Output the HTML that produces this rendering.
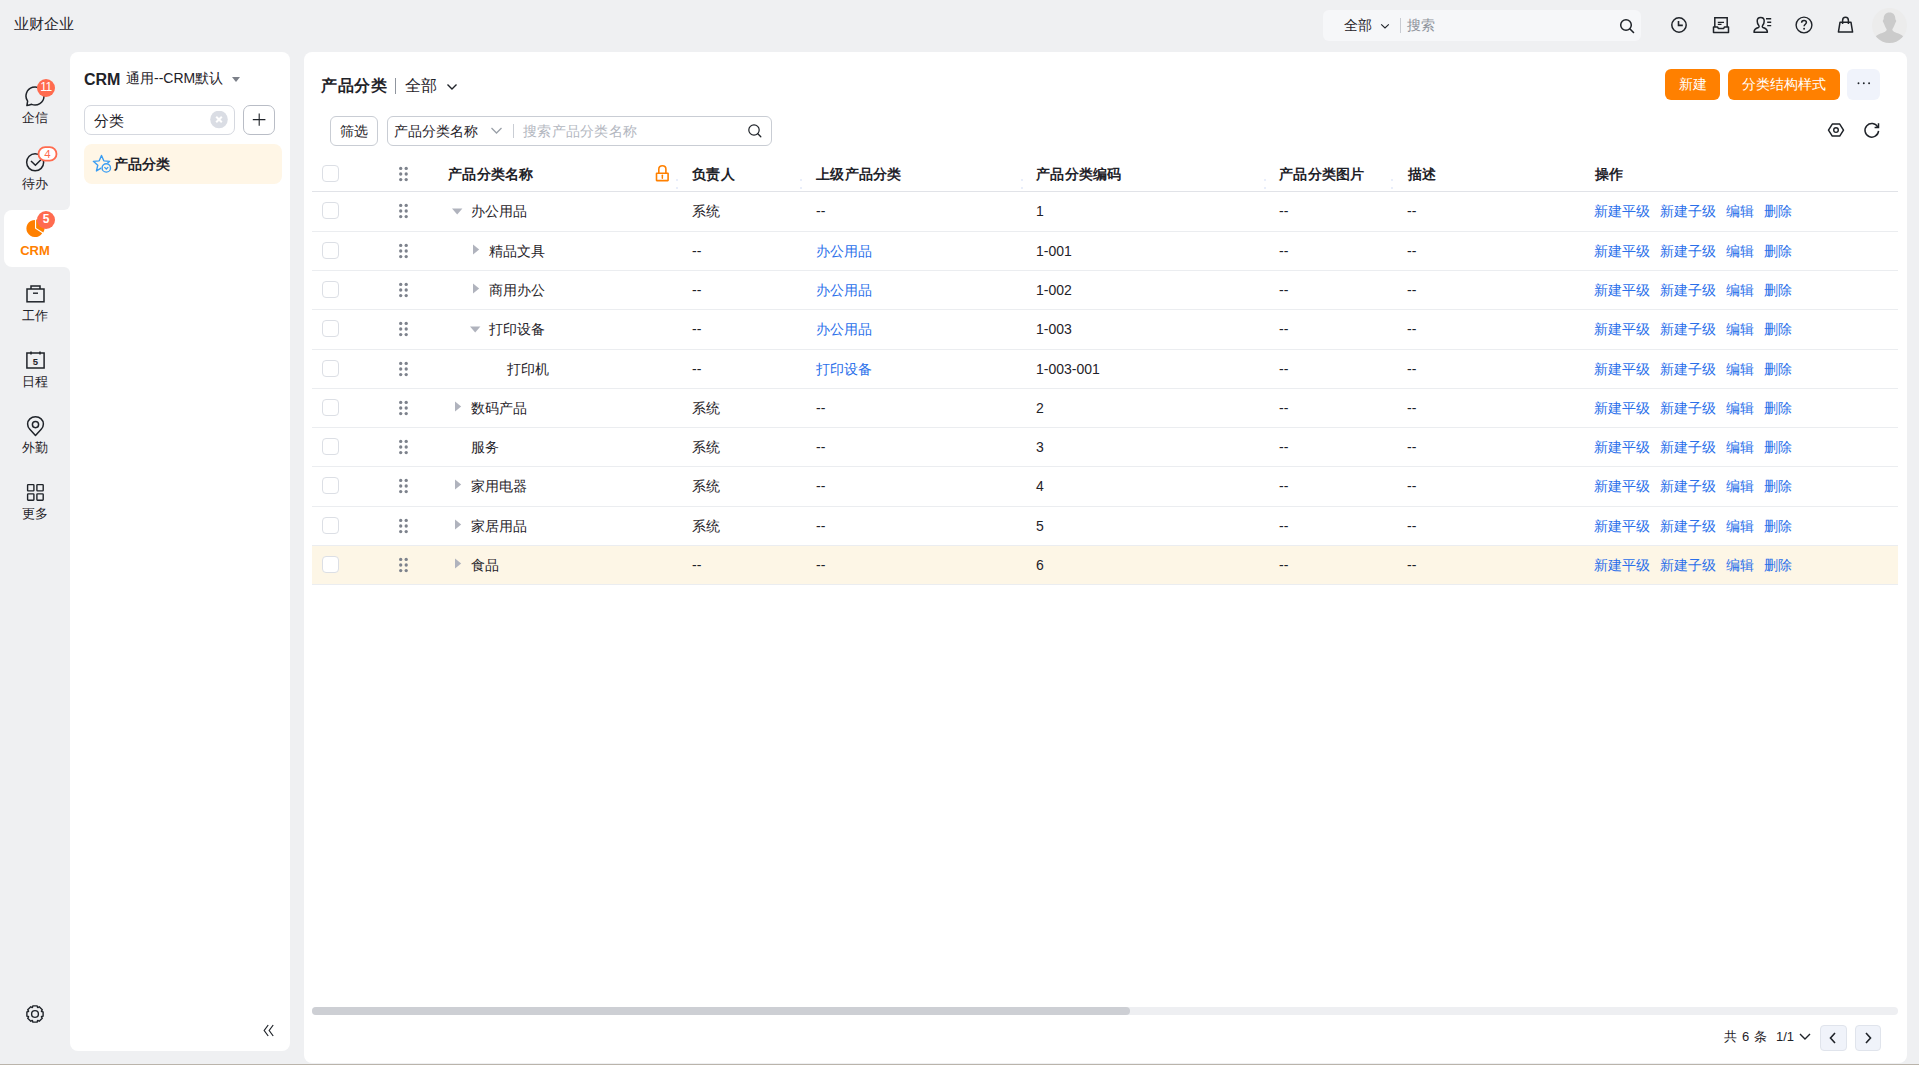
<!DOCTYPE html>
<html><head><meta charset="utf-8">
<style>
*{box-sizing:border-box;margin:0;padding:0}
html,body{width:1919px;height:1065px;overflow:hidden}
body{background:#eff0f2;font-family:"Liberation Sans",sans-serif;color:#1f2329;position:relative;font-size:14px}
.abs{position:absolute}
svg{display:block}
/* top bar */
#brand{left:14px;top:14px;font-size:15px;line-height:20px;color:#1f2329}
#gsearch{left:1323px;top:10px;width:318px;height:31px;background:#f6f7f9;border-radius:6px}
#gsearch .all{left:21px;top:6px;font-size:14px;line-height:19px}
#gsearch .sep{left:77px;top:8px;width:1px;height:15px;background:#c9ccd3}
#gsearch .ph{left:84px;top:6px;font-size:14px;line-height:19px;color:#8f949c}
.ticon{top:14px}
/* left nav */
.nav{left:0;width:70px;height:56px;text-align:center}
.nav .lbl{position:absolute;left:0;width:70px;font-size:13px;line-height:16px;color:#1f2329}
.badge{position:absolute;height:16px;min-width:16px;border-radius:8px;background:#f5694c;color:#fff;font-size:11px;line-height:16px;text-align:center;padding:0 3px}
/* panels */
#p2{left:70px;top:52px;width:220px;height:999px;background:#fff;border-radius:8px}
#p3{left:304px;top:52px;width:1603px;height:1011px;background:#fff;border-radius:8px}
.btn-o{position:absolute;background:#ff8000;color:#fff;border-radius:6px;font-size:14px;text-align:center;line-height:31px;height:31px}
/* table */
.row{position:absolute;left:312px;width:1586px;height:40px;border-bottom:1px solid #eeeff2}
.cell{position:absolute;top:0;line-height:39px;font-size:14px;white-space:nowrap}
.hd .cell{font-weight:bold}
.cb{position:absolute;left:10px;top:11px;width:18px;height:18px;border:1px solid #dcdee3;border-radius:4px;background:#fff}
.drag{position:absolute;left:86px;top:12px}
.lnk{color:#2b6fe0}
.tri-r{position:absolute;width:0;height:0;border-top:5px solid transparent;border-bottom:5px solid transparent;border-left:6px solid #a6a9b0}
.tri-d{position:absolute;width:0;height:0;border-left:5px solid transparent;border-right:5px solid transparent;border-top:6px solid #a6a9b0}
.ops span{margin-right:9px}
</style></head><body>

<!-- TOP BAR -->
<div id="gsearch" class="abs">
  <div class="abs all">全部</div>
  <svg class="abs" style="left:57px;top:12px" width="10" height="8" viewBox="0 0 10 8"><path d="M1.2 2.3 L5 6 L8.8 2.3" fill="none" stroke="#1f2329" stroke-width="1.1"/></svg>
  <div class="abs sep"></div>
  <div class="abs ph">搜索</div>
  <svg class="abs" style="left:296px;top:8px" width="16" height="16" viewBox="0 0 16 16"><circle cx="7" cy="7" r="5.3" fill="none" stroke="#1f2329" stroke-width="1.5"/><path d="M11 11 L14.5 14.5" stroke="#1f2329" stroke-width="1.6" stroke-linecap="round"/></svg>
</div>


<!-- top icons -->
<svg class="abs" style="left:1670px;top:16px" width="18" height="18" viewBox="0 0 18 18"><circle cx="9" cy="9" r="7.2" fill="none" stroke="#1f2329" stroke-width="1.5"/><path d="M8.5 5 V9.4 H12.8" fill="none" stroke="#1f2329" stroke-width="1.6"/></svg>
<svg class="abs" style="left:1712px;top:16px" width="18" height="18" viewBox="0 0 18 18"><path d="M2.8 11 V1.8 H15.2 V11" fill="none" stroke="#1f2329" stroke-width="1.5"/><path d="M5.8 6.3 H12 M5.8 8.4 H9.5" stroke="#1f2329" stroke-width="1.2"/><path d="M1.5 11 H5.5 L6.5 12.6 H11.5 L12.5 11 H16.5 V16.5 H1.5 Z" fill="none" stroke="#1f2329" stroke-width="1.5" stroke-linejoin="round"/></svg>
<svg class="abs" style="left:1753px;top:16px" width="20" height="18" viewBox="0 0 20 18"><path d="M1 16.3 C1 13.5 2.5 12.3 5.5 11.5 C6.2 11.2 6.3 10.3 5.8 9.6 C4.7 8.3 4.2 6.8 4.2 5 C4.2 2.9 5.6 1.5 7.7 1.5 C9.8 1.5 11.2 2.9 11.2 5 C11.2 6.8 10.7 8.3 9.6 9.6 C9.1 10.3 9.2 11.2 9.9 11.5 C12.9 12.3 14.4 13.5 14.4 16.3 Z" fill="none" stroke="#1f2329" stroke-width="1.5" stroke-linejoin="round"/><path d="M13 2.7 H18.2 M14.2 6.3 H18.2 M14.2 9.6 H18.2" stroke="#1f2329" stroke-width="1.4"/></svg>
<svg class="abs" style="left:1795px;top:16px" width="18" height="18" viewBox="0 0 18 18"><circle cx="9" cy="9" r="7.9" fill="none" stroke="#1f2329" stroke-width="1.4"/><path d="M6.6 6.8 C6.6 5.3 7.7 4.5 9 4.5 C10.4 4.5 11.4 5.4 11.4 6.6 C11.4 8.2 9.1 8.4 9.1 10.3" fill="none" stroke="#1f2329" stroke-width="1.5"/><circle cx="9.1" cy="12.7" r="0.95" fill="#1f2329"/></svg>
<svg class="abs" style="left:1837px;top:16px" width="17" height="18" viewBox="0 0 17 18"><path d="M3 6.3 H14 L15.6 16.1 H1.4 Z" fill="none" stroke="#1f2329" stroke-width="1.5" stroke-linejoin="round"/><path d="M5.6 8 V4.4 C5.6 2.5 6.8 1.3 8.5 1.3 C10.2 1.3 11.4 2.5 11.4 4.4 V8" fill="none" stroke="#1f2329" stroke-width="1.5"/></svg>
<svg class="abs" style="left:1872px;top:8px" width="35" height="35" viewBox="0 0 35 35"><defs><clipPath id="av"><circle cx="17.5" cy="17.5" r="17.5"/></clipPath></defs><circle cx="17.5" cy="17.5" r="17.5" fill="#ececec"/><g clip-path="url(#av)" fill="#cbcbcb"><path d="M17.5 4.5 C21.5 4.5 23.5 7.5 23.3 11 L24.3 13 L23.1 15.5 C22.3 18 21 20 20.3 21.5 C20.5 22.8 21.5 23.6 23 24.2 C28 26 32 27.5 32.5 31 L32.5 36 L2.5 36 L2.5 31 C3 27.5 7 26 12 24.2 C13.5 23.6 14.5 22.8 14.7 21.5 C14 20 12.7 18 11.9 15.5 L10.7 13 L11.7 11 C11.5 7.5 13.5 4.5 17.5 4.5 Z"/></g></svg>

<!-- LEFT NAV -->
<div class="abs" style="left:62px;top:200px;width:10px;height:77px;background:#fff"></div>
<div class="abs" style="left:0;top:0;width:70px;height:210px;background:#eff0f2;border-bottom-right-radius:6px"></div>
<div class="abs" style="left:0;top:267px;width:70px;height:798px;background:#eff0f2;border-top-right-radius:6px"></div>
<div class="abs" style="left:4px;top:210px;width:70px;height:57px;background:#fff;border-radius:8px 0 0 8px"></div>
<div id="brand2" class="abs" style="left:14px;top:14px;font-size:15px;line-height:20px;color:#1f2329">业财企业</div>

<!-- 企信 -->
<svg class="abs" style="left:24px;top:86px" width="23" height="21" viewBox="0 0 23 21"><path d="M2.9 19.6 L3.63 15.16 A9 9 0 1 1 7.63 18.34 Q5.5 19 2.9 19.6 Z" fill="none" stroke="#1f2329" stroke-width="1.5" stroke-linejoin="round"/></svg>
<div class="badge" style="left:37px;top:79px;width:18px;height:18px;line-height:18px;border-radius:9px;font-size:12px;padding:0;line-height:16px;letter-spacing:-0.5px;background:#ff6b4f">11</div>
<div class="abs" style="left:0;top:109px;width:70px;text-align:center;font-size:13px;line-height:17px">企信</div>
<!-- 待办 -->
<svg class="abs" style="left:25px;top:152px" width="20" height="21" viewBox="0 0 20 21"><circle cx="10.15" cy="10.35" r="8.5" fill="none" stroke="#1f2329" stroke-width="1.5"/><path d="M6 9 L10.4 13.2 L15.9 7.8" fill="none" stroke="#1f2329" stroke-width="1.5"/></svg>
<svg class="abs" style="left:37px;top:145px" width="21" height="17" viewBox="0 0 21 17"><rect x="1.5" y="2.2" width="18" height="13.4" rx="6.7" fill="#fff" stroke="#ff6b4f" stroke-width="1.8"/><text x="10.5" y="12.7" text-anchor="middle" font-family="Liberation Sans" font-size="11.5" fill="#ff6b4f">4</text></svg>
<div class="abs" style="left:0;top:175px;width:70px;text-align:center;font-size:13px;line-height:17px">待办</div>
<!-- CRM -->
<svg class="abs" style="left:26px;top:219px" width="20" height="20" viewBox="0 0 20 20"><path d="M9 9.5 L9 0.9 A8.6 8.6 0 1 0 16.21 14.18 Z" fill="#ff8000"/><path d="M10.1 8.9 L10.1 0.4 A8.6 8.6 0 0 1 17.3 13.5 Z" fill="#ff8000"/></svg>
<div class="badge" style="left:37px;top:211px;width:18px;height:18px;line-height:16px;border-radius:9px;font-size:12px;padding:0;background:#ff6b4f;border:0;font-weight:bold">5</div>
<div class="abs" style="left:0;top:242px;width:70px;text-align:center;font-size:13px;line-height:17px;font-weight:bold;color:#ff8000">CRM</div>
<!-- 工作 -->
<svg class="abs" style="left:26px;top:285px" width="19" height="18" viewBox="0 0 19 18"><rect x="1" y="4" width="17" height="12.8" fill="none" stroke="#1f2329" stroke-width="1.5"/><path d="M5 4 V1 H14 V4" fill="none" stroke="#1f2329" stroke-width="1.5"/><path d="M7 8.2 H12" stroke="#1f2329" stroke-width="1.4"/></svg>
<div class="abs" style="left:0;top:307px;width:70px;text-align:center;font-size:13px;line-height:17px">工作</div>
<!-- 日程 -->
<svg class="abs" style="left:26px;top:351px" width="19" height="18" viewBox="0 0 19 18"><rect x="0.9" y="2" width="17.2" height="15" fill="none" stroke="#1f2329" stroke-width="1.5"/><path d="M5 0.5 V3.5 M14 0.5 V3.5" stroke="#1f2329" stroke-width="1.5"/><text x="9.5" y="13.6" text-anchor="middle" font-family="Liberation Sans" font-weight="bold" font-size="9.5" fill="#1f2329">5</text></svg>
<div class="abs" style="left:0;top:373px;width:70px;text-align:center;font-size:13px;line-height:17px">日程</div>
<!-- 外勤 -->
<svg class="abs" style="left:26px;top:416px" width="19" height="21" viewBox="0 0 19 21"><path d="M9.5 19.5 L3.8 13.3 C2.4 11.8 1.6 9.9 1.6 8 C1.6 3.8 5.1 0.8 9.5 0.8 C13.9 0.8 17.4 3.8 17.4 8 C17.4 9.9 16.6 11.8 15.2 13.3 Z" fill="none" stroke="#1f2329" stroke-width="1.5" stroke-linejoin="round"/><circle cx="9.5" cy="8.6" r="3.1" fill="none" stroke="#1f2329" stroke-width="1.5"/></svg>
<div class="abs" style="left:0;top:439px;width:70px;text-align:center;font-size:13px;line-height:17px">外勤</div>
<!-- 更多 -->
<svg class="abs" style="left:26px;top:483px" width="19" height="19" viewBox="0 0 19 19"><rect x="1.6" y="1.6" width="6.3" height="6.3" rx="0.6" fill="none" stroke="#1f2329" stroke-width="1.4"/><rect x="10.9" y="1.6" width="6.3" height="6.3" rx="0.6" fill="none" stroke="#1f2329" stroke-width="1.4"/><rect x="1.6" y="10.9" width="6.3" height="6.3" rx="0.6" fill="none" stroke="#1f2329" stroke-width="1.4"/><rect x="10.9" y="10.9" width="6.3" height="6.3" rx="0.6" fill="none" stroke="#1f2329" stroke-width="1.4"/></svg>
<div class="abs" style="left:0;top:505px;width:70px;text-align:center;font-size:13px;line-height:17px">更多</div>
<!-- settings -->
<svg class="abs" style="left:25px;top:1004px" width="20" height="20" viewBox="0 0 20 20"><path d="M7.49 3.46 L7.83 1.89 L12.17 1.89 L12.51 3.46 L12.85 3.61 L14.20 2.73 L17.27 5.80 L16.39 7.15 L16.54 7.49 L18.11 7.83 L18.11 12.17 L16.54 12.51 L16.39 12.85 L17.27 14.20 L14.20 17.27 L12.85 16.39 L12.51 16.54 L12.17 18.11 L7.83 18.11 L7.49 16.54 L7.15 16.39 L5.80 17.27 L2.73 14.20 L3.61 12.85 L3.46 12.51 L1.89 12.17 L1.89 7.83 L3.46 7.49 L3.61 7.15 L2.73 5.80 L5.80 2.73 L7.15 3.61 Z" fill="none" stroke="#1f2329" stroke-width="1.4" stroke-linejoin="round"/><circle cx="10" cy="10" r="3.4" fill="none" stroke="#1f2329" stroke-width="1.4"/></svg>

<!-- PANEL 2 -->
<div id="p2" class="abs"></div>
<div class="abs" style="left:84px;top:70px;font-size:16px;line-height:20px;font-weight:bold">CRM</div>
<div class="abs" style="left:126px;top:68px;font-size:14px;line-height:20px">通用--CRM默认</div>
<div class="abs" style="left:232px;top:77px;width:0;height:0;border-left:4px solid transparent;border-right:4px solid transparent;border-top:5px solid #7c8089"></div>
<div class="abs" style="left:84px;top:105px;width:151px;height:30px;border:1px solid #d5d8df;border-radius:7px"></div>
<div class="abs" style="left:93.5px;top:111px;font-size:15px;line-height:20px">分类</div>
<svg class="abs" style="left:210px;top:111px" width="18" height="18" viewBox="0 0 18 18"><circle cx="9" cy="8.5" r="8.8" fill="#dadde4"/><path d="M6.2 5.7 L11.8 11.3 M11.8 5.7 L6.2 11.3" stroke="#fff" stroke-width="2"/></svg>
<div class="abs" style="left:243px;top:105px;width:32px;height:30px;border:1px solid #b9bdc6;border-radius:7px"></div>
<svg class="abs" style="left:252px;top:113px" width="14" height="14" viewBox="0 0 14 14"><path d="M7.2 0.4 V12.8 M0.8 6.6 H13.4" stroke="#1f2329" stroke-width="1.1"/></svg>
<div class="abs" style="left:84px;top:144px;width:198px;height:40px;background:#fff6e6;border-radius:8px"></div>
<svg class="abs" style="left:92px;top:154px" width="20" height="19" viewBox="0 0 20 19"><path d="M9.50 1.40 L11.79 6.84 L17.68 7.34 L13.21 11.21 L14.55 16.96 L9.50 13.90 L4.45 16.96 L5.79 11.21 L1.32 7.34 L7.21 6.84 Z" fill="none" stroke="#3a9df2" stroke-width="1.4" stroke-linejoin="round"/><circle cx="14.3" cy="13.9" r="5.2" fill="#fff6e6"/><circle cx="14.3" cy="13.9" r="4.2" fill="none" stroke="#3a9df2" stroke-width="1.4"/><path d="M12.4 13.1 L14.3 15 L16.2 13.1" fill="none" stroke="#3a9df2" stroke-width="1.3"/></svg>
<div class="abs" style="left:114px;top:154px;font-size:14px;line-height:20px;font-weight:bold">产品分类</div>
<svg class="abs" style="left:263px;top:1024px" width="12" height="13" viewBox="0 0 12 13"><path d="M5.2 1 L1.2 6.5 L5.2 12 M10.2 1 L6.2 6.5 L10.2 12" fill="none" stroke="#1f2329" stroke-width="1.2"/></svg>

<!-- PANEL 3 -->
<div id="p3" class="abs"></div>
<div class="abs" style="left:0;top:1064px;width:1919px;height:1px;background:#bab4ab"></div>


<!-- title -->
<div class="abs" style="left:321px;top:75px;font-size:16px;line-height:22px;font-weight:bold;letter-spacing:0.6px">产品分类</div>
<div class="abs" style="left:395px;top:78px;width:1px;height:16px;background:#8f959e"></div>
<div class="abs" style="left:405px;top:75px;font-size:16px;line-height:22px">全部</div>
<svg class="abs" style="left:446px;top:82px" width="12" height="9" viewBox="0 0 12 9"><path d="M1.5 2.5 L6 7 L10.5 2.5" fill="none" stroke="#1f2329" stroke-width="1.4"/></svg>
<div class="btn-o" style="left:1665px;top:69px;width:55px">新建</div>
<div class="btn-o" style="left:1728px;top:69px;width:112px">分类结构样式</div>
<div class="abs" style="left:1847px;top:69px;width:33px;height:31px;background:#f0f3fb;border-radius:6px"></div>
<svg class="abs" style="left:1855px;top:82px" width="17" height="4" viewBox="0 0 17 4"><circle cx="3.5" cy="1.2" r="0.95" fill="#1f2329"/><circle cx="8.8" cy="1.2" r="0.95" fill="#1f2329"/><circle cx="14.1" cy="1.2" r="0.95" fill="#1f2329"/></svg>

<!-- filter row -->
<div class="abs" style="left:330px;top:116px;width:48px;height:30px;border:1px solid #c9cdd4;border-radius:6px;font-size:14px;line-height:28px;text-align:center">筛选</div>
<div class="abs" style="left:387px;top:116px;width:385px;height:30px;border:1px solid #c9cdd4;border-radius:6px"></div>
<div class="abs" style="left:394px;top:121px;font-size:14px;line-height:20px">产品分类名称</div>
<svg class="abs" style="left:490px;top:126px" width="13" height="9" viewBox="0 0 13 9"><path d="M1.5 2 L6.5 7 L11.5 2" fill="none" stroke="#9aa0a8" stroke-width="1.3"/></svg>
<div class="abs" style="left:513px;top:124px;width:1px;height:14px;background:#c9cdd4"></div>
<div class="abs" style="left:523px;top:121px;font-size:14px;line-height:20px;color:#b3b7bf;letter-spacing:0.3px">搜索产品分类名称</div>
<svg class="abs" style="left:747px;top:123px" width="16" height="16" viewBox="0 0 16 16"><circle cx="7" cy="7" r="5.2" fill="none" stroke="#1f2329" stroke-width="1.2"/><path d="M10.8 10.8 L13.8 13.8" stroke="#1f2329" stroke-width="1.3" stroke-linecap="round"/></svg>
<svg class="abs" style="left:1827px;top:121px" width="18" height="18" viewBox="0 0 18 18"><path d="M5.3 3.1 H12.7 L16.5 9.1 L12.7 15.1 H5.3 L1.5 9.1 Z" fill="none" stroke="#1f2329" stroke-width="1.5" stroke-linejoin="round"/><circle cx="9" cy="9.1" r="2.3" fill="none" stroke="#1f2329" stroke-width="1.4"/></svg>
<svg class="abs" style="left:1863px;top:121px" width="18" height="18" viewBox="0 0 18 18"><path d="M15.57 9.89 A6.8 6.8 0 1 1 14.8 6.1" fill="none" stroke="#1f2329" stroke-width="1.5"/><path d="M15.5 2.3 V6.6 H11.6" fill="none" stroke="#1f2329" stroke-width="1.5"/></svg>

<!-- TABLE -->
<div class="abs" style="left:322px;top:165px;width:17px;height:17px;border:1px solid #dcdfe5;border-radius:4px;background:#fff"></div>
<svg class="abs" style="left:396px;top:166px" width="14" height="16" viewBox="0 0 14 16"><circle cx="4.7" cy="2.4" r="1.65" fill="#7d828c"/><circle cx="10.2" cy="2.4" r="1.65" fill="#7d828c"/><circle cx="4.7" cy="8.0" r="1.65" fill="#7d828c"/><circle cx="10.2" cy="8.0" r="1.65" fill="#7d828c"/><circle cx="4.7" cy="13.6" r="1.65" fill="#7d828c"/><circle cx="10.2" cy="13.6" r="1.65" fill="#7d828c"/></svg>
<div class="abs" style="left:448px;top:164px;font-size:14px;line-height:20px;white-space:nowrap;font-weight:bold;letter-spacing:0.3px">产品分类名称</div>
<div class="abs" style="left:692px;top:164px;font-size:14px;line-height:20px;white-space:nowrap;font-weight:bold;letter-spacing:0.3px">负责人</div>
<div class="abs" style="left:816px;top:164px;font-size:14px;line-height:20px;white-space:nowrap;font-weight:bold;letter-spacing:0.3px">上级产品分类</div>
<div class="abs" style="left:1036px;top:164px;font-size:14px;line-height:20px;white-space:nowrap;font-weight:bold;letter-spacing:0.3px">产品分类编码</div>
<div class="abs" style="left:1279px;top:164px;font-size:14px;line-height:20px;white-space:nowrap;font-weight:bold;letter-spacing:0.3px">产品分类图片</div>
<div class="abs" style="left:1408px;top:164px;font-size:14px;line-height:20px;white-space:nowrap;font-weight:bold;letter-spacing:0.3px">描述</div>
<div class="abs" style="left:1595px;top:164px;font-size:14px;line-height:20px;white-space:nowrap;font-weight:bold;letter-spacing:0.3px">操作</div>
<svg class="abs" style="left:654px;top:164px" width="16" height="18" viewBox="0 0 16 18"><path d="M4.8 9.2 V5.2 C4.8 3 6.2 1.8 8.35 1.8 C10.5 1.8 11.9 3 11.9 5.2 V9.2" fill="none" stroke="#ff8000" stroke-width="1.6"/><rect x="2.5" y="9.2" width="11.6" height="7.4" rx="0.3" fill="none" stroke="#ff8000" stroke-width="1.6"/><path d="M8.35 11.2 V14.2" stroke="#ff8000" stroke-width="1.5" stroke-linecap="round"/></svg>
<div class="abs" style="left:312px;top:191px;width:1586px;height:1px;background:#e1e3e8"></div>
<div class="abs" style="left:676px;top:179px;width:2px;height:2px;background:#e9eefa"></div>
<div class="abs" style="left:676px;top:187px;width:2px;height:2px;background:#e9eefa"></div>
<div class="abs" style="left:800px;top:179px;width:2px;height:2px;background:#e9eefa"></div>
<div class="abs" style="left:800px;top:187px;width:2px;height:2px;background:#e9eefa"></div>
<div class="abs" style="left:1021px;top:179px;width:2px;height:2px;background:#e9eefa"></div>
<div class="abs" style="left:1021px;top:187px;width:2px;height:2px;background:#e9eefa"></div>
<div class="abs" style="left:1264px;top:179px;width:2px;height:2px;background:#e9eefa"></div>
<div class="abs" style="left:1264px;top:187px;width:2px;height:2px;background:#e9eefa"></div>
<div class="abs" style="left:1391px;top:179px;width:2px;height:2px;background:#e9eefa"></div>
<div class="abs" style="left:1391px;top:187px;width:2px;height:2px;background:#e9eefa"></div>
<div class="abs" style="left:312px;top:231px;width:1586px;height:1px;background:#ebedf0"></div>
<div class="abs" style="left:322px;top:202px;width:17px;height:17px;border:1px solid #dcdfe5;border-radius:4px;background:#fff"></div>
<svg class="abs" style="left:396px;top:203px" width="14" height="16" viewBox="0 0 14 16"><circle cx="4.7" cy="2.4" r="1.65" fill="#7d828c"/><circle cx="10.2" cy="2.4" r="1.65" fill="#7d828c"/><circle cx="4.7" cy="8.0" r="1.65" fill="#7d828c"/><circle cx="10.2" cy="8.0" r="1.65" fill="#7d828c"/><circle cx="4.7" cy="13.6" r="1.65" fill="#7d828c"/><circle cx="10.2" cy="13.6" r="1.65" fill="#7d828c"/></svg>
<svg class="abs" style="left:452px;top:207px" width="11" height="10" viewBox="0 0 11 10"><path d="M0 1.6 H10.4 L5.2 7.6 Z" fill="#b0b3bd"/></svg>
<div class="abs" style="left:471px;top:201px;font-size:14px;line-height:20px;white-space:nowrap;">办公用品</div>
<div class="abs" style="left:692px;top:201px;font-size:14px;line-height:20px;white-space:nowrap;">系统</div>
<div class="abs" style="left:816px;top:201px;font-size:14px;line-height:20px;white-space:nowrap;">--</div>
<div class="abs" style="left:1036px;top:201px;font-size:14px;line-height:20px;white-space:nowrap;">1</div>
<div class="abs" style="left:1279px;top:201px;font-size:14px;line-height:20px;white-space:nowrap;">--</div>
<div class="abs" style="left:1407px;top:201px;font-size:14px;line-height:20px;white-space:nowrap;">--</div>
<div class="abs" style="left:1594px;top:201px;font-size:14px;line-height:20px;white-space:nowrap;color:#2a6fea">新建平级<span style="margin-left:10px">新建子级</span><span style="margin-left:10px">编辑</span><span style="margin-left:10px">删除</span></div>
<div class="abs" style="left:312px;top:270px;width:1586px;height:1px;background:#ebedf0"></div>
<div class="abs" style="left:322px;top:242px;width:17px;height:17px;border:1px solid #dcdfe5;border-radius:4px;background:#fff"></div>
<svg class="abs" style="left:396px;top:243px" width="14" height="16" viewBox="0 0 14 16"><circle cx="4.7" cy="2.4" r="1.65" fill="#7d828c"/><circle cx="10.2" cy="2.4" r="1.65" fill="#7d828c"/><circle cx="4.7" cy="8.0" r="1.65" fill="#7d828c"/><circle cx="10.2" cy="8.0" r="1.65" fill="#7d828c"/><circle cx="4.7" cy="13.6" r="1.65" fill="#7d828c"/><circle cx="10.2" cy="13.6" r="1.65" fill="#7d828c"/></svg>
<svg class="abs" style="left:473px;top:243px" width="8" height="14" viewBox="0 0 8 14"><path d="M0 1.5 L6.2 6.5 L0 11.5 Z" fill="#b0b3bd"/></svg>
<div class="abs" style="left:489px;top:241px;font-size:14px;line-height:20px;white-space:nowrap;">精品文具</div>
<div class="abs" style="left:692px;top:241px;font-size:14px;line-height:20px;white-space:nowrap;">--</div>
<div class="abs" style="left:816px;top:241px;font-size:14px;line-height:20px;white-space:nowrap;color:#2a6fea">办公用品</div>
<div class="abs" style="left:1036px;top:241px;font-size:14px;line-height:20px;white-space:nowrap;">1-001</div>
<div class="abs" style="left:1279px;top:241px;font-size:14px;line-height:20px;white-space:nowrap;">--</div>
<div class="abs" style="left:1407px;top:241px;font-size:14px;line-height:20px;white-space:nowrap;">--</div>
<div class="abs" style="left:1594px;top:241px;font-size:14px;line-height:20px;white-space:nowrap;color:#2a6fea">新建平级<span style="margin-left:10px">新建子级</span><span style="margin-left:10px">编辑</span><span style="margin-left:10px">删除</span></div>
<div class="abs" style="left:312px;top:309px;width:1586px;height:1px;background:#ebedf0"></div>
<div class="abs" style="left:322px;top:281px;width:17px;height:17px;border:1px solid #dcdfe5;border-radius:4px;background:#fff"></div>
<svg class="abs" style="left:396px;top:282px" width="14" height="16" viewBox="0 0 14 16"><circle cx="4.7" cy="2.4" r="1.65" fill="#7d828c"/><circle cx="10.2" cy="2.4" r="1.65" fill="#7d828c"/><circle cx="4.7" cy="8.0" r="1.65" fill="#7d828c"/><circle cx="10.2" cy="8.0" r="1.65" fill="#7d828c"/><circle cx="4.7" cy="13.6" r="1.65" fill="#7d828c"/><circle cx="10.2" cy="13.6" r="1.65" fill="#7d828c"/></svg>
<svg class="abs" style="left:473px;top:282px" width="8" height="14" viewBox="0 0 8 14"><path d="M0 1.5 L6.2 6.5 L0 11.5 Z" fill="#b0b3bd"/></svg>
<div class="abs" style="left:489px;top:280px;font-size:14px;line-height:20px;white-space:nowrap;">商用办公</div>
<div class="abs" style="left:692px;top:280px;font-size:14px;line-height:20px;white-space:nowrap;">--</div>
<div class="abs" style="left:816px;top:280px;font-size:14px;line-height:20px;white-space:nowrap;color:#2a6fea">办公用品</div>
<div class="abs" style="left:1036px;top:280px;font-size:14px;line-height:20px;white-space:nowrap;">1-002</div>
<div class="abs" style="left:1279px;top:280px;font-size:14px;line-height:20px;white-space:nowrap;">--</div>
<div class="abs" style="left:1407px;top:280px;font-size:14px;line-height:20px;white-space:nowrap;">--</div>
<div class="abs" style="left:1594px;top:280px;font-size:14px;line-height:20px;white-space:nowrap;color:#2a6fea">新建平级<span style="margin-left:10px">新建子级</span><span style="margin-left:10px">编辑</span><span style="margin-left:10px">删除</span></div>
<div class="abs" style="left:312px;top:349px;width:1586px;height:1px;background:#ebedf0"></div>
<div class="abs" style="left:322px;top:320px;width:17px;height:17px;border:1px solid #dcdfe5;border-radius:4px;background:#fff"></div>
<svg class="abs" style="left:396px;top:321px" width="14" height="16" viewBox="0 0 14 16"><circle cx="4.7" cy="2.4" r="1.65" fill="#7d828c"/><circle cx="10.2" cy="2.4" r="1.65" fill="#7d828c"/><circle cx="4.7" cy="8.0" r="1.65" fill="#7d828c"/><circle cx="10.2" cy="8.0" r="1.65" fill="#7d828c"/><circle cx="4.7" cy="13.6" r="1.65" fill="#7d828c"/><circle cx="10.2" cy="13.6" r="1.65" fill="#7d828c"/></svg>
<svg class="abs" style="left:470px;top:325px" width="11" height="10" viewBox="0 0 11 10"><path d="M0 1.6 H10.4 L5.2 7.6 Z" fill="#b0b3bd"/></svg>
<div class="abs" style="left:489px;top:319px;font-size:14px;line-height:20px;white-space:nowrap;">打印设备</div>
<div class="abs" style="left:692px;top:319px;font-size:14px;line-height:20px;white-space:nowrap;">--</div>
<div class="abs" style="left:816px;top:319px;font-size:14px;line-height:20px;white-space:nowrap;color:#2a6fea">办公用品</div>
<div class="abs" style="left:1036px;top:319px;font-size:14px;line-height:20px;white-space:nowrap;">1-003</div>
<div class="abs" style="left:1279px;top:319px;font-size:14px;line-height:20px;white-space:nowrap;">--</div>
<div class="abs" style="left:1407px;top:319px;font-size:14px;line-height:20px;white-space:nowrap;">--</div>
<div class="abs" style="left:1594px;top:319px;font-size:14px;line-height:20px;white-space:nowrap;color:#2a6fea">新建平级<span style="margin-left:10px">新建子级</span><span style="margin-left:10px">编辑</span><span style="margin-left:10px">删除</span></div>
<div class="abs" style="left:312px;top:388px;width:1586px;height:1px;background:#ebedf0"></div>
<div class="abs" style="left:322px;top:360px;width:17px;height:17px;border:1px solid #dcdfe5;border-radius:4px;background:#fff"></div>
<svg class="abs" style="left:396px;top:361px" width="14" height="16" viewBox="0 0 14 16"><circle cx="4.7" cy="2.4" r="1.65" fill="#7d828c"/><circle cx="10.2" cy="2.4" r="1.65" fill="#7d828c"/><circle cx="4.7" cy="8.0" r="1.65" fill="#7d828c"/><circle cx="10.2" cy="8.0" r="1.65" fill="#7d828c"/><circle cx="4.7" cy="13.6" r="1.65" fill="#7d828c"/><circle cx="10.2" cy="13.6" r="1.65" fill="#7d828c"/></svg>
<div class="abs" style="left:507px;top:359px;font-size:14px;line-height:20px;white-space:nowrap;">打印机</div>
<div class="abs" style="left:692px;top:359px;font-size:14px;line-height:20px;white-space:nowrap;">--</div>
<div class="abs" style="left:816px;top:359px;font-size:14px;line-height:20px;white-space:nowrap;color:#2a6fea">打印设备</div>
<div class="abs" style="left:1036px;top:359px;font-size:14px;line-height:20px;white-space:nowrap;">1-003-001</div>
<div class="abs" style="left:1279px;top:359px;font-size:14px;line-height:20px;white-space:nowrap;">--</div>
<div class="abs" style="left:1407px;top:359px;font-size:14px;line-height:20px;white-space:nowrap;">--</div>
<div class="abs" style="left:1594px;top:359px;font-size:14px;line-height:20px;white-space:nowrap;color:#2a6fea">新建平级<span style="margin-left:10px">新建子级</span><span style="margin-left:10px">编辑</span><span style="margin-left:10px">删除</span></div>
<div class="abs" style="left:312px;top:427px;width:1586px;height:1px;background:#ebedf0"></div>
<div class="abs" style="left:322px;top:399px;width:17px;height:17px;border:1px solid #dcdfe5;border-radius:4px;background:#fff"></div>
<svg class="abs" style="left:396px;top:400px" width="14" height="16" viewBox="0 0 14 16"><circle cx="4.7" cy="2.4" r="1.65" fill="#7d828c"/><circle cx="10.2" cy="2.4" r="1.65" fill="#7d828c"/><circle cx="4.7" cy="8.0" r="1.65" fill="#7d828c"/><circle cx="10.2" cy="8.0" r="1.65" fill="#7d828c"/><circle cx="4.7" cy="13.6" r="1.65" fill="#7d828c"/><circle cx="10.2" cy="13.6" r="1.65" fill="#7d828c"/></svg>
<svg class="abs" style="left:455px;top:400px" width="8" height="14" viewBox="0 0 8 14"><path d="M0 1.5 L6.2 6.5 L0 11.5 Z" fill="#b0b3bd"/></svg>
<div class="abs" style="left:471px;top:398px;font-size:14px;line-height:20px;white-space:nowrap;">数码产品</div>
<div class="abs" style="left:692px;top:398px;font-size:14px;line-height:20px;white-space:nowrap;">系统</div>
<div class="abs" style="left:816px;top:398px;font-size:14px;line-height:20px;white-space:nowrap;">--</div>
<div class="abs" style="left:1036px;top:398px;font-size:14px;line-height:20px;white-space:nowrap;">2</div>
<div class="abs" style="left:1279px;top:398px;font-size:14px;line-height:20px;white-space:nowrap;">--</div>
<div class="abs" style="left:1407px;top:398px;font-size:14px;line-height:20px;white-space:nowrap;">--</div>
<div class="abs" style="left:1594px;top:398px;font-size:14px;line-height:20px;white-space:nowrap;color:#2a6fea">新建平级<span style="margin-left:10px">新建子级</span><span style="margin-left:10px">编辑</span><span style="margin-left:10px">删除</span></div>
<div class="abs" style="left:312px;top:466px;width:1586px;height:1px;background:#ebedf0"></div>
<div class="abs" style="left:322px;top:438px;width:17px;height:17px;border:1px solid #dcdfe5;border-radius:4px;background:#fff"></div>
<svg class="abs" style="left:396px;top:439px" width="14" height="16" viewBox="0 0 14 16"><circle cx="4.7" cy="2.4" r="1.65" fill="#7d828c"/><circle cx="10.2" cy="2.4" r="1.65" fill="#7d828c"/><circle cx="4.7" cy="8.0" r="1.65" fill="#7d828c"/><circle cx="10.2" cy="8.0" r="1.65" fill="#7d828c"/><circle cx="4.7" cy="13.6" r="1.65" fill="#7d828c"/><circle cx="10.2" cy="13.6" r="1.65" fill="#7d828c"/></svg>
<div class="abs" style="left:471px;top:437px;font-size:14px;line-height:20px;white-space:nowrap;">服务</div>
<div class="abs" style="left:692px;top:437px;font-size:14px;line-height:20px;white-space:nowrap;">系统</div>
<div class="abs" style="left:816px;top:437px;font-size:14px;line-height:20px;white-space:nowrap;">--</div>
<div class="abs" style="left:1036px;top:437px;font-size:14px;line-height:20px;white-space:nowrap;">3</div>
<div class="abs" style="left:1279px;top:437px;font-size:14px;line-height:20px;white-space:nowrap;">--</div>
<div class="abs" style="left:1407px;top:437px;font-size:14px;line-height:20px;white-space:nowrap;">--</div>
<div class="abs" style="left:1594px;top:437px;font-size:14px;line-height:20px;white-space:nowrap;color:#2a6fea">新建平级<span style="margin-left:10px">新建子级</span><span style="margin-left:10px">编辑</span><span style="margin-left:10px">删除</span></div>
<div class="abs" style="left:312px;top:506px;width:1586px;height:1px;background:#ebedf0"></div>
<div class="abs" style="left:322px;top:477px;width:17px;height:17px;border:1px solid #dcdfe5;border-radius:4px;background:#fff"></div>
<svg class="abs" style="left:396px;top:478px" width="14" height="16" viewBox="0 0 14 16"><circle cx="4.7" cy="2.4" r="1.65" fill="#7d828c"/><circle cx="10.2" cy="2.4" r="1.65" fill="#7d828c"/><circle cx="4.7" cy="8.0" r="1.65" fill="#7d828c"/><circle cx="10.2" cy="8.0" r="1.65" fill="#7d828c"/><circle cx="4.7" cy="13.6" r="1.65" fill="#7d828c"/><circle cx="10.2" cy="13.6" r="1.65" fill="#7d828c"/></svg>
<svg class="abs" style="left:455px;top:478px" width="8" height="14" viewBox="0 0 8 14"><path d="M0 1.5 L6.2 6.5 L0 11.5 Z" fill="#b0b3bd"/></svg>
<div class="abs" style="left:471px;top:476px;font-size:14px;line-height:20px;white-space:nowrap;">家用电器</div>
<div class="abs" style="left:692px;top:476px;font-size:14px;line-height:20px;white-space:nowrap;">系统</div>
<div class="abs" style="left:816px;top:476px;font-size:14px;line-height:20px;white-space:nowrap;">--</div>
<div class="abs" style="left:1036px;top:476px;font-size:14px;line-height:20px;white-space:nowrap;">4</div>
<div class="abs" style="left:1279px;top:476px;font-size:14px;line-height:20px;white-space:nowrap;">--</div>
<div class="abs" style="left:1407px;top:476px;font-size:14px;line-height:20px;white-space:nowrap;">--</div>
<div class="abs" style="left:1594px;top:476px;font-size:14px;line-height:20px;white-space:nowrap;color:#2a6fea">新建平级<span style="margin-left:10px">新建子级</span><span style="margin-left:10px">编辑</span><span style="margin-left:10px">删除</span></div>
<div class="abs" style="left:312px;top:545px;width:1586px;height:1px;background:#ebedf0"></div>
<div class="abs" style="left:322px;top:517px;width:17px;height:17px;border:1px solid #dcdfe5;border-radius:4px;background:#fff"></div>
<svg class="abs" style="left:396px;top:518px" width="14" height="16" viewBox="0 0 14 16"><circle cx="4.7" cy="2.4" r="1.65" fill="#7d828c"/><circle cx="10.2" cy="2.4" r="1.65" fill="#7d828c"/><circle cx="4.7" cy="8.0" r="1.65" fill="#7d828c"/><circle cx="10.2" cy="8.0" r="1.65" fill="#7d828c"/><circle cx="4.7" cy="13.6" r="1.65" fill="#7d828c"/><circle cx="10.2" cy="13.6" r="1.65" fill="#7d828c"/></svg>
<svg class="abs" style="left:455px;top:518px" width="8" height="14" viewBox="0 0 8 14"><path d="M0 1.5 L6.2 6.5 L0 11.5 Z" fill="#b0b3bd"/></svg>
<div class="abs" style="left:471px;top:516px;font-size:14px;line-height:20px;white-space:nowrap;">家居用品</div>
<div class="abs" style="left:692px;top:516px;font-size:14px;line-height:20px;white-space:nowrap;">系统</div>
<div class="abs" style="left:816px;top:516px;font-size:14px;line-height:20px;white-space:nowrap;">--</div>
<div class="abs" style="left:1036px;top:516px;font-size:14px;line-height:20px;white-space:nowrap;">5</div>
<div class="abs" style="left:1279px;top:516px;font-size:14px;line-height:20px;white-space:nowrap;">--</div>
<div class="abs" style="left:1407px;top:516px;font-size:14px;line-height:20px;white-space:nowrap;">--</div>
<div class="abs" style="left:1594px;top:516px;font-size:14px;line-height:20px;white-space:nowrap;color:#2a6fea">新建平级<span style="margin-left:10px">新建子级</span><span style="margin-left:10px">编辑</span><span style="margin-left:10px">删除</span></div>
<div class="abs" style="left:312px;top:546px;width:1586px;height:38px;background:#fdf6e6"></div>
<div class="abs" style="left:312px;top:584px;width:1586px;height:1px;background:#ebedf0"></div>
<div class="abs" style="left:322px;top:556px;width:17px;height:17px;border:1px solid #dcdfe5;border-radius:4px;background:#fff"></div>
<svg class="abs" style="left:396px;top:557px" width="14" height="16" viewBox="0 0 14 16"><circle cx="4.7" cy="2.4" r="1.65" fill="#7d828c"/><circle cx="10.2" cy="2.4" r="1.65" fill="#7d828c"/><circle cx="4.7" cy="8.0" r="1.65" fill="#7d828c"/><circle cx="10.2" cy="8.0" r="1.65" fill="#7d828c"/><circle cx="4.7" cy="13.6" r="1.65" fill="#7d828c"/><circle cx="10.2" cy="13.6" r="1.65" fill="#7d828c"/></svg>
<svg class="abs" style="left:455px;top:557px" width="8" height="14" viewBox="0 0 8 14"><path d="M0 1.5 L6.2 6.5 L0 11.5 Z" fill="#b0b3bd"/></svg>
<div class="abs" style="left:471px;top:555px;font-size:14px;line-height:20px;white-space:nowrap;">食品</div>
<div class="abs" style="left:692px;top:555px;font-size:14px;line-height:20px;white-space:nowrap;">--</div>
<div class="abs" style="left:816px;top:555px;font-size:14px;line-height:20px;white-space:nowrap;">--</div>
<div class="abs" style="left:1036px;top:555px;font-size:14px;line-height:20px;white-space:nowrap;">6</div>
<div class="abs" style="left:1279px;top:555px;font-size:14px;line-height:20px;white-space:nowrap;">--</div>
<div class="abs" style="left:1407px;top:555px;font-size:14px;line-height:20px;white-space:nowrap;">--</div>
<div class="abs" style="left:1594px;top:555px;font-size:14px;line-height:20px;white-space:nowrap;color:#2a6fea">新建平级<span style="margin-left:10px">新建子级</span><span style="margin-left:10px">编辑</span><span style="margin-left:10px">删除</span></div>
<div class="abs" style="left:312px;top:1007px;width:1586px;height:8px;background:#eeeff2;border-radius:4px"></div>
<div class="abs" style="left:312px;top:1007px;width:818px;height:8px;background:#cdcfd4;border-radius:4px"></div>
<div class="abs" style="left:1724px;top:1027px;font-size:13px;line-height:20px;white-space:nowrap;word-spacing:1.5px">共 6 条</div>
<div class="abs" style="left:1776px;top:1027px;font-size:13px;line-height:20px;white-space:nowrap">1/1</div>
<svg class="abs" style="left:1799px;top:1032px" width="12" height="9" viewBox="0 0 12 9"><path d="M1 2 L6 7 L11 2" fill="none" stroke="#1f2329" stroke-width="1.4"/></svg>
<div class="abs" style="left:1820px;top:1025px;width:27px;height:26px;background:#f0f3fa;border:1px solid #e0e4ec;border-radius:4px"></div>
<div class="abs" style="left:1855px;top:1025px;width:26px;height:26px;background:#f0f3fa;border:1px solid #e0e4ec;border-radius:4px"></div>
<svg class="abs" style="left:1828px;top:1031px" width="10" height="14" viewBox="0 0 10 14"><path d="M7 2 L2.5 7 L7 12" fill="none" stroke="#1f2329" stroke-width="1.6"/></svg>
<svg class="abs" style="left:1863px;top:1031px" width="10" height="14" viewBox="0 0 10 14"><path d="M3 2 L7.5 7 L3 12" fill="none" stroke="#1f2329" stroke-width="1.6"/></svg>
</body></html>
